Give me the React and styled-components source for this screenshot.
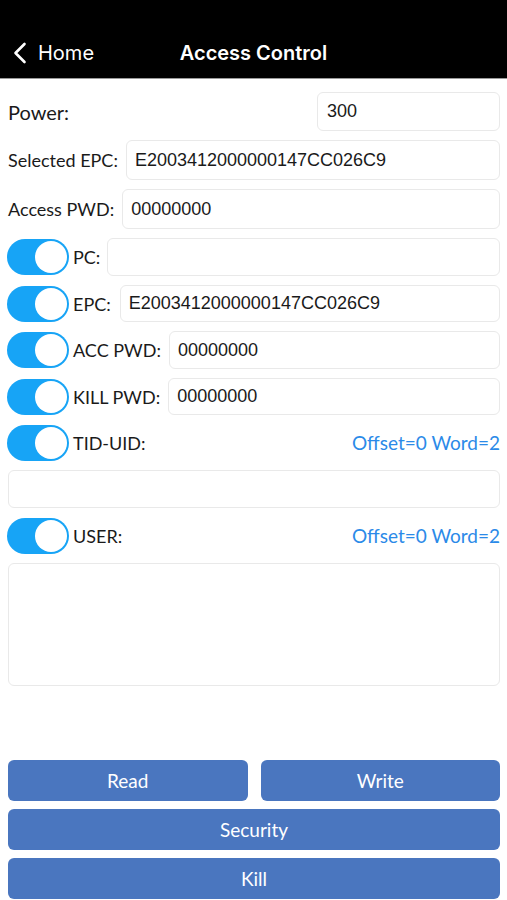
import React from "react";
import styled, { createGlobalStyle } from "styled-components";

const GlobalStyle = createGlobalStyle`
  body {
    margin: 0;
    background: #ffffff;
    font-family: "Lato", "Noto Sans", sans-serif;
  }
`;

const Page = styled.div`
  width: 507px;
  height: 900px;
  overflow: hidden;
  display: flex;
  flex-direction: column;
  background: #ffffff;
`;

const NavBar = styled.div`
  height: 78px;
  flex: none;
  background: #000000;
  border-bottom: 1px solid #9a9a9a;
  display: flex;
  align-items: flex-end;
  justify-content: center;
  position: relative;
  color: #ffffff;
  font-family: "Inter", "Liberation Sans", sans-serif;
`;

const NavTitle = styled.div`
  font-size: 20px;
  font-weight: 600;
  height: 50px;
  line-height: 50px;
`;

const BackButton = styled.div`
  position: absolute;
  left: 13px;
  bottom: 0;
  height: 50px;
  display: flex;
  align-items: center;
  gap: 11px;
  font-size: 20px;
`;

const Form = styled.div`
  display: flex;
  flex-direction: column;
  gap: 9px;
  padding: 13px 7px 0 8px;
`;

const Row = styled.div`
  display: flex;
  align-items: center;
  flex: none;
  height: ${(p) => p.h}px;
`;

const Label = styled.div`
  font-size: ${(p) => p.size || 18}px;
  color: #1a1a1a;
  white-space: nowrap;
  margin-right: ${(p) => p.gap || 8}px;
`;

const Field = styled.div`
  flex: ${(p) => (p.w ? "none" : 1)};
  width: ${(p) => (p.w ? `${p.w}px` : "auto")};
  margin-left: ${(p) => (p.w ? "auto" : 0)};
  height: 100%;
  box-sizing: border-box;
  border: 1px solid #e9e9e9;
  border-radius: 6px;
  display: flex;
  align-items: center;
  padding-left: ${(p) => p.pad || 8}px;
  font-family: "Liberation Sans", "Arial", sans-serif;
  font-size: 18px;
  color: #1a1a1a;
`;

const Toggle = styled.div`
  width: 62px;
  height: 36px;
  border-radius: 18px;
  background: #17a4f6;
  box-sizing: border-box;
  display: flex;
  align-items: center;
  justify-content: flex-end;
  padding-right: 2px;
  margin-left: -1px;
  margin-right: 4px;
  flex: none;
`;

const Knob = styled.div`
  width: 32px;
  height: 32px;
  border-radius: 50%;
  background: #ffffff;
`;

const Hint = styled.div`
  margin-left: auto;
  font-size: 19px;
  color: #2b8ae8;
`;

const TextBox = styled.div`
  height: 123px;
  flex: none;
  border: 1px solid #e9e9e9;
  border-radius: 6px;
  box-sizing: border-box;
`;

const Actions = styled.div`
  display: flex;
  flex-direction: column;
  gap: 8px;
  padding: 0 7px 0 8px;
  margin-top: 74px;
`;

const ActionRow = styled.div`
  display: flex;
  gap: 13px;
`;

const ActionButton = styled.button`
  flex: ${(p) => (p.half ? 1 : "none")};
  height: 41px;
  border: none;
  border-radius: 6px;
  background: #4a76bf;
  color: #ffffff;
  font-family: "Lato", "Noto Sans", sans-serif;
  font-size: 19px;
  padding: 0;
`;

const SwitchRow = ({ h, label, gap, value, hint, pad }) => (
  <Row h={h}>
    <Toggle>
      <Knob />
    </Toggle>
    <Label gap={gap}>{label}</Label>
    {hint ? <Hint>{hint}</Hint> : <Field pad={pad}>{value}</Field>}
  </Row>
);

const App = () => {
  return (
    <Page>
      <GlobalStyle />
      <NavBar>
        <BackButton>
          <svg width="14" height="22" viewBox="0 0 14 22">
            <path d="M11.5 2 L2.5 11 L11.5 20" fill="none" stroke="#fff" strokeWidth="2.6" strokeLinecap="round" strokeLinejoin="round" />
          </svg>
          <span>Home</span>
        </BackButton>
        <NavTitle>Access Control</NavTitle>
      </NavBar>

      <Form>
        <Row h={39}>
          <Label size={20}>Power:</Label>
          <Field w={183} pad={9}>300</Field>
        </Row>
        <Row h={40}>
          <Label>Selected EPC:</Label>
          <Field>E2003412000000147CC026C9</Field>
        </Row>
        <Row h={40}>
          <Label>Access PWD:</Label>
          <Field>00000000</Field>
        </Row>
        <SwitchRow h={38} label="PC:" gap={7} value="" />
        <SwitchRow h={37} label="EPC:" gap={9} value="E2003412000000147CC026C9" />
        <SwitchRow h={38} label="ACC PWD:" gap={8} value="00000000" />
        <SwitchRow h={37} label="KILL PWD:" gap={8} value="00000000" />
        <SwitchRow h={37} label="TID-UID:" hint="Offset=0 Word=2" />
        <Row h={38}>
          <Field />
        </Row>
        <SwitchRow h={37} label="USER:" hint="Offset=0 Word=2" />
        <TextBox />
      </Form>

      <Actions>
        <ActionRow>
          <ActionButton half>Read</ActionButton>
          <ActionButton half>Write</ActionButton>
        </ActionRow>
        <ActionButton>Security</ActionButton>
        <ActionButton>Kill</ActionButton>
      </Actions>
    </Page>
  );
};

export default App;
